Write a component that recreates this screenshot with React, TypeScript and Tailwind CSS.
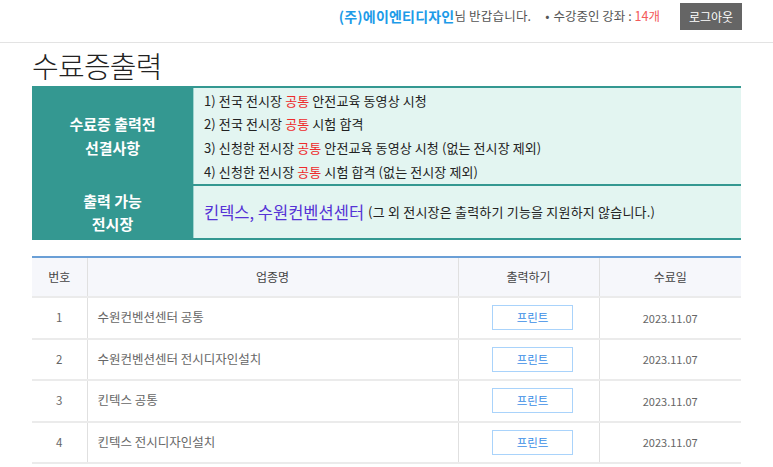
const rows = [
  { no: 1, name: '수원컨벤션센터 공통', date: '2023.11.07' },
  { no: 2, name: '수원컨벤션센터 전시디자인설치', date: '2023.11.07' },
  { no: 3, name: '킨텍스 공통', date: '2023.11.07' },
  { no: 4, name: '킨텍스 전시디자인설치', date: '2023.11.07' },
];

const font = { fontFamily: '"Noto Sans CJK KR", "Noto Sans", sans-serif' };

export default function App() {
  return (
    <div className="w-[773px] h-[467px] overflow-hidden bg-white text-[#333]" style={font}>
      {/* top bar */}
      <div className="h-[43px] border-b border-[#e3e3e3] pt-[3px]">
        <div className="h-[27px] flex items-center justify-end pr-[31px]">
          <div className="text-[12.5px] text-[#555] flex items-center tracking-[0.2px]">
            <span className="text-[#1d9be8] font-bold text-[14px]">(주)에이엔티디자인</span>
            <span>님 반갑습니다.</span>
          </div>
          <div className="ml-[14px] text-[12.5px] text-[#555] flex items-center">
            <span className="mr-[4px]">•</span>
            <span>수강중인 강좌 : </span>
            <span className="text-[#f35a5a] ml-[3px]">14개</span>
          </div>
          <button className="ml-[20px] w-[62px] h-[27px] bg-[#656565] text-white text-[12px]">로그아웃</button>
        </div>
      </div>

      <div className="px-[32px]">
        <h1 className="text-[29px] font-light text-[#222] leading-none pt-[8px] pb-[6px] tracking-tight">수료증출력</h1>

        {/* info box */}
        <div className="border-t-2 border-b-2 border-[#349891] bg-[#e3f5f1]">
          <div className="flex h-[98px] border-b-2 border-[#349891]">
            <div className="w-[162px] bg-[#349891] text-white font-bold text-[15px] flex flex-col items-center justify-center leading-[24px] border-r border-[#9fd4cf]">
              <span>수료증 출력전</span>
              <span>선결사항</span>
            </div>
            <div className="flex-1 pl-[10px] flex flex-col justify-center text-[13px] tracking-[0.1px] text-[#222] leading-[23.7px]">
              <div>1) 전국 전시장 <span className="text-[#ee2b2b]">공통</span> 안전교육 동영상 시청</div>
              <div>2) 전국 전시장 <span className="text-[#ee2b2b]">공통</span> 시험 합격</div>
              <div>3) 신청한 전시장 <span className="text-[#ee2b2b]">공통</span> 안전교육 동영상 시청 (없는 전시장 제외)</div>
              <div>4) 신청한 전시장 <span className="text-[#ee2b2b]">공통</span> 시험 합격 (없는 전시장 제외)</div>
            </div>
          </div>
          <div className="flex h-[52px]">
            <div className="w-[162px] bg-[#349891] text-white font-bold text-[15px] flex flex-col items-center justify-center leading-[23px] border-r border-[#9fd4cf]">
              <span>출력 가능</span>
              <span>전시장</span>
            </div>
            <div className="flex-1 pl-[10px] flex items-center text-[13px] tracking-[0.2px] text-[#222]">
              <span className="text-[16.5px] text-[#5533d6] mr-[4px] tracking-normal">킨텍스, 수원컨벤션센터</span>
              <span>(그 외 전시장은 출력하기 기능을 지원하지 않습니다.)</span>
            </div>
          </div>
        </div>

        {/* table */}
        <table className="w-full mt-[16px] border-t-2 border-[#6a9fd6] text-[12px] border-collapse">
          <thead>
            <tr className="bg-[#f6f7fb] h-[40px] text-[#444]">
              <th className="w-[55px] font-normal border-r border-[#e0e0e0]">번호</th>
              <th className="w-[371px] font-normal border-r border-[#e0e0e0]">업종명</th>
              <th className="w-[141px] font-normal border-r border-[#e0e0e0]">출력하기</th>
              <th className="font-normal">수료일</th>
            </tr>
          </thead>
          <tbody>
            {rows.map((r) => (
              <tr key={r.no} className="h-[41.5px] border-t-2 border-[#ebebeb] text-[#666]">
                <td className="text-center border-r border-[#e0e0e0] text-[11.5px]">{r.no}</td>
                <td className="pl-[10px] border-r border-[#e0e0e0] text-[12.5px]">{r.name}</td>
                <td className="text-center border-r border-[#e0e0e0]">
                  <button className="ml-[8px] w-[81px] h-[25px] border border-[#a9d3fb] text-[#3a8ee6] text-[11.5px]">프린트</button>
                </td>
                <td className="text-center text-[11px]">{r.date}</td>
              </tr>
            ))}
            <tr className="border-t-2 border-[#ebebeb]"><td colSpan={4}></td></tr>
          </tbody>
        </table>
      </div>
    </div>
  );
}
